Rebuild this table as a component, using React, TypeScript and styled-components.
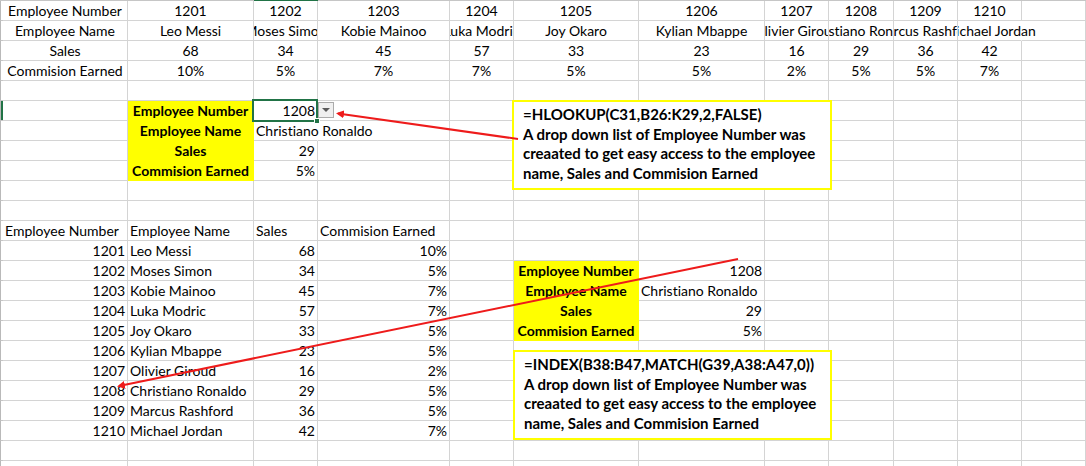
import React from "react";
import styled, { createGlobalStyle } from "styled-components";

const GRID = "#d4d4d4";
const GREEN = "#217346";
const YELLOW = "#ffff00";
const FONT = `Lato, "Liberation Sans", Arial, sans-serif`;

const GlobalStyle = createGlobalStyle`
  html, body { margin: 0; padding: 0; background: #fff; overflow: hidden; }
  body { font-family: ${FONT}; font-variant-ligatures: none; }
`;

const Sheet = styled.div`
  position: relative;
  width: 1086px;
  height: 466px;
  overflow: hidden;
  display: grid;
  grid-template-columns: 3px 125px 126px 64px 132px 64px 125px 126px 64px 65px 64px 64px 64px;
  grid-template-rows: 1px repeat(24, 20px);
  font-family: ${FONT};
  font-size: 14px;
  font-variant-ligatures: none;
  color: #000;
  background: #fff;
`;

const HeaderEdge = styled.div<{ $active?: boolean }>`
  background: ${(p) => (p.$active ? GREEN : "#c6c6c6")};
`;

const RowEdge = styled.div<{ $active?: boolean }>`
  box-sizing: border-box;
  border-left: 1px solid #b9b9b9;
  border-bottom: 1px solid #c6c6c6;
  background: ${(p) => (p.$active ? GREEN : "#fff")};
`;

type Align = "l" | "c" | "r";
type Spill = "right" | "centerRight";

const justify = (a: Align) => (a === "l" ? "flex-start" : a === "c" ? "center" : "flex-end");

const Cell = styled.div<{ $align: Align; $bold?: boolean; $fill?: boolean; $spill?: Spill; $sel?: boolean }>`
  position: relative;
  box-sizing: border-box;
  min-width: 0;
  display: flex;
  align-items: flex-end;
  justify-content: ${(p) => justify(p.$align)};
  padding: 0 2px;
  line-height: 19px;
  white-space: nowrap;
  font-weight: ${(p) => (p.$bold ? 700 : 400)};
  background: ${(p) => (p.$fill ? YELLOW : "transparent")};
  border-right: 1px solid ${(p) => (p.$fill ? YELLOW : p.$spill ? "transparent" : GRID)};
  border-bottom: 1px solid ${(p) => (p.$fill ? YELLOW : GRID)};
  overflow: ${(p) => (p.$spill || p.$sel ? "visible" : "hidden")};
  clip-path: ${(p) => (p.$spill === "centerRight" ? "inset(0 -300px 0 0)" : "none")};
  z-index: ${(p) => (p.$sel ? 3 : p.$spill ? 1 : 0)};
`;

const Value = styled.span`
  flex: none;
`;

const Selection = styled.div`
  position: absolute;
  left: -2px;
  top: -2px;
  width: 66px;
  height: 23px;
  box-sizing: border-box;
  border: 2px solid ${GREEN};
  pointer-events: none;
`;

const FillHandle = styled.div`
  position: absolute;
  right: -4px;
  bottom: -4px;
  width: 6px;
  height: 6px;
  box-sizing: border-box;
  background: ${GREEN};
  border: 1px solid #fff;
`;

const DropButton = styled.div`
  position: absolute;
  left: calc(100% + 1px);
  top: 1px;
  width: 16px;
  height: 16px;
  box-sizing: border-box;
  border: 1px solid #ababab;
  background: #f0f0f0;
  display: flex;
  align-items: center;
  justify-content: center;
`;

const Caret = styled.span`
  width: 0;
  height: 0;
  border-left: 4px solid transparent;
  border-right: 4px solid transparent;
  border-top: 4px solid #5a5a5a;
`;

const Note = styled.div<{ $top: number; $left: number; $width: number }>`
  position: absolute;
  top: ${(p) => p.$top}px;
  left: ${(p) => p.$left}px;
  width: ${(p) => p.$width}px;
  height: 90px;
  box-sizing: border-box;
  border: 2px solid ${YELLOW};
  background: #fff;
  padding: 3px 9px 0;
  font-size: 15px;
  font-weight: 700;
  line-height: 19.5px;
  white-space: nowrap;
  z-index: 4;
`;

const NoteLine = styled.div``;

const Arrows = styled.svg`
  position: absolute;
  left: 0;
  top: 0;
  width: 1086px;
  height: 466px;
  pointer-events: none;
  z-index: 5;
`;

type CellSpec = { v?: string; a?: Align; b?: boolean; fill?: boolean; spill?: Spill; sel?: boolean };

const ids = ["1201", "1202", "1203", "1204", "1205", "1206", "1207", "1208", "1209", "1210"];
const names = [
  "Leo Messi",
  "Moses Simon",
  "Kobie Mainoo",
  "Luka Modric",
  "Joy Okaro",
  "Kylian Mbappe",
  "Olivier Giroud",
  "Christiano Ronaldo",
  "Marcus Rashford",
  "Michael Jordan",
];
const sales = ["68", "34", "45", "57", "33", "23", "16", "29", "36", "42"];
const comm = ["10%", "5%", "7%", "7%", "5%", "5%", "2%", "5%", "5%", "7%"];

const COLS = 12;
const ROWS = 24;

const rows: CellSpec[][] = Array.from({ length: ROWS }, () => Array.from({ length: COLS }, () => ({})));

const set = (r: number, c: number, spec: CellSpec) => {
  rows[r - 1][c] = spec;
};

// Top horizontal table
const labels = ["Employee Number", "Employee Name", "Sales", "Commision Earned"];
const series = [ids, names, sales, comm];
labels.forEach((label, i) => {
  set(i + 1, 0, { v: label, a: "c" });
  series[i].forEach((val, j) => {
    set(i + 1, j + 1, { v: val, a: "c", spill: i === 1 && j === 9 ? "centerRight" : undefined });
  });
});

// HLOOKUP block
labels.forEach((label, i) => set(6 + i, 1, { v: label, a: "c", b: true, fill: true }));
set(6, 2, { v: "1208", a: "r", sel: true });
set(7, 2, { v: "Christiano Ronaldo", a: "l", spill: "right" });
set(8, 2, { v: "29", a: "r" });
set(9, 2, { v: "5%", a: "r" });

// Vertical table
set(12, 0, { v: "Employee Number", a: "l" });
set(12, 1, { v: "Employee Name", a: "l" });
set(12, 2, { v: "Sales", a: "l" });
set(12, 3, { v: "Commision Earned", a: "l" });
ids.forEach((id, i) => {
  set(13 + i, 0, { v: id, a: "r" });
  set(13 + i, 1, { v: names[i], a: "l" });
  set(13 + i, 2, { v: sales[i], a: "r" });
  set(13 + i, 3, { v: comm[i], a: "r" });
});

// INDEX/MATCH block
labels.forEach((label, i) => set(14 + i, 5, { v: label, a: "c", b: true, fill: true }));
set(14, 6, { v: "1208", a: "r" });
set(15, 6, { v: "Christiano Ronaldo", a: "l" });
set(16, 6, { v: "29", a: "r" });
set(17, 6, { v: "5%", a: "r" });

const noteText = [
  "A drop down list of Employee Number was",
  "creaated to get easy access to the employee",
  "name, Sales and Commision Earned",
];

export default function App() {
  return (
    <>
      <GlobalStyle />
      <Sheet>
        <HeaderEdge />
        {Array.from({ length: COLS }, (_, c) => (
          <HeaderEdge key={`h${c}`} $active={c === 2} />
        ))}
        {rows.map((row, r) => (
          <React.Fragment key={r}>
            <RowEdge $active={r === 5} />
            {row.map((cell, c) => (
              <Cell
                key={c}
                $align={cell.a ?? "l"}
                $bold={cell.b}
                $fill={cell.fill}
                $spill={cell.spill}
                $sel={cell.sel}
              >
                {cell.v && <Value>{cell.v}</Value>}
                {cell.sel && (
                  <>
                    <Selection>
                      <FillHandle />
                    </Selection>
                    <DropButton>
                      <Caret />
                    </DropButton>
                  </>
                )}
              </Cell>
            ))}
          </React.Fragment>
        ))}

        <Note $top={100} $left={512} $width={320}>
          <NoteLine>=HLOOKUP(C31,B26:K29,2,FALSE)</NoteLine>
          {noteText.map((t) => (
            <NoteLine key={t}>{t}</NoteLine>
          ))}
        </Note>
        <Note $top={350} $left={513} $width={319}>
          <NoteLine>=INDEX(B38:B47,MATCH(G39,A38:A47,0))</NoteLine>
          {noteText.map((t) => (
            <NoteLine key={t}>{t}</NoteLine>
          ))}
        </Note>

        <Arrows viewBox="0 0 1086 466">
          <defs>
            <marker
              id="arrowhead"
              markerWidth="8"
              markerHeight="8"
              refX="6"
              refY="4"
              orient="auto"
              markerUnits="userSpaceOnUse"
            >
              <path d="M0,0 L8,4 L0,8 Z" fill="#ee1b1b" />
            </marker>
          </defs>
          <line x1="518" y1="139" x2="338" y2="113.5" stroke="#ee1b1b" strokeWidth="2" markerEnd="url(#arrowhead)" />
          <line x1="738" y1="259" x2="119" y2="386" stroke="#ee1b1b" strokeWidth="2" markerEnd="url(#arrowhead)" />
        </Arrows>
      </Sheet>
    </>
  );
}
